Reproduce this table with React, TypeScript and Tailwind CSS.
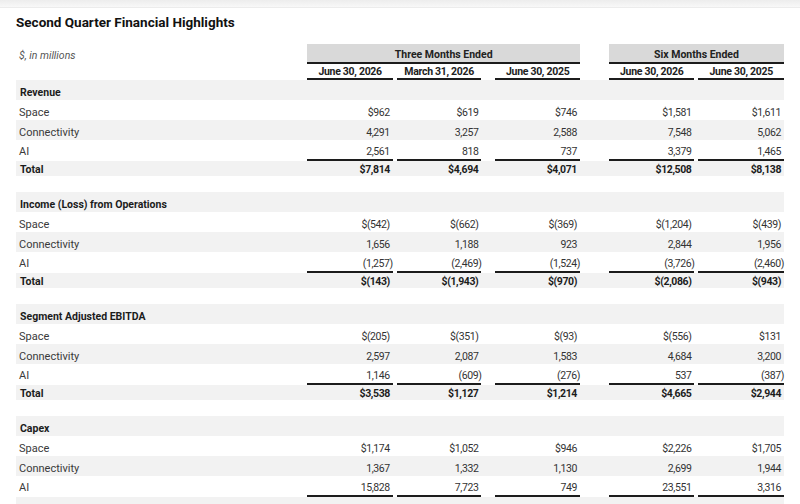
import React from 'react';

type Row = { label: string; values: string[] };
type Section = { title: string; rows: Row[]; total?: string[] };

const sections: Section[] = [
  {
    title: 'Revenue',
    rows: [
      { label: 'Space', values: ['$962', '$619', '$746', '$1,581', '$1,611'] },
      { label: 'Connectivity', values: ['4,291', '3,257', '2,588', '7,548', '5,062'] },
      { label: 'AI', values: ['2,561', '818', '737', '3,379', '1,465'] },
    ],
    total: ['$7,814', '$4,694', '$4,071', '$12,508', '$8,138'],
  },
  {
    title: 'Income (Loss) from Operations',
    rows: [
      { label: 'Space', values: ['$(542)', '$(662)', '$(369)', '$(1,204)', '$(439)'] },
      { label: 'Connectivity', values: ['1,656', '1,188', '923', '2,844', '1,956'] },
      { label: 'AI', values: ['(1,257)', '(2,469)', '(1,524)', '(3,726)', '(2,460)'] },
    ],
    total: ['$(143)', '$(1,943)', '$(970)', '$(2,086)', '$(943)'],
  },
  {
    title: 'Segment Adjusted EBITDA',
    rows: [
      { label: 'Space', values: ['$(205)', '$(351)', '$(93)', '$(556)', '$131'] },
      { label: 'Connectivity', values: ['2,597', '2,087', '1,583', '4,684', '3,200'] },
      { label: 'AI', values: ['1,146', '(609)', '(276)', '537', '(387)'] },
    ],
    total: ['$3,538', '$1,127', '$1,214', '$4,665', '$2,944'],
  },
  {
    title: 'Capex',
    rows: [
      { label: 'Space', values: ['$1,174', '$1,052', '$946', '$2,226', '$1,705'] },
      { label: 'Connectivity', values: ['1,367', '1,332', '1,130', '2,699', '1,944'] },
      { label: 'AI', values: ['15,828', '7,723', '749', '23,551', '3,316'] },
    ],
    // total row falls below the fold
  },
];

// widths + gaps of the five value columns
const cols = [
  'w-[86px]',
  'ml-[4px] w-[85px]',
  'ml-[14px] w-[85px]',
  'ml-[29px] w-[86px]',
  'ml-[4px] w-[86px]',
];

// space / connectivity / AI rows (AI carries the underline)
const rowCls = ['h-[20px] pt-[5px] bg-white', 'h-[20px] pt-[5px] bg-[#f2f2f2]', 'h-[21px] pt-[4px] bg-white'];

const dates = ['June 30, 2026', 'March 31, 2026', 'June 30, 2025', 'June 30, 2026', 'June 30, 2025'];

function Cells({ values, bold, line }: { values: string[]; bold?: boolean; line?: boolean }) {
  return (
    <>
      {values.map((v, i) => (
        <div
          key={i}
          className={`${cols[i]} flex h-full justify-end pr-[3px] ${line ? 'border-b-2 border-[#1c1c1c]' : ''}`}
        >
          <span
            className={`text-[10.5px] leading-[15px] tracking-[-0.4px] ${bold ? 'font-bold text-[#1c1c1c]' : 'text-[#333]'} ${v.startsWith('(') ? 'mr-[-3px]' : ''}`}
          >
            {v}
          </span>
        </div>
      ))}
    </>
  );
}

function SectionBlock({ s }: { s: Section }) {
  return (
    <div className="flex flex-col">
      <div className="h-[20px] bg-[#f2f2f2] pl-[4px] pt-[5px] text-[10.5px] leading-[15px] font-bold text-[#1c1c1c]">
        {s.title}
      </div>
      {s.rows.map((r, i) => (
        <div key={r.label} className={`flex ${rowCls[i]}`}>
          <div className="w-[293px] pl-[3px] text-[11px] leading-[15px] text-[#3a3a3a]">{r.label}</div>
          <Cells values={r.values} line={i === 2} />
        </div>
      ))}
      {s.total ? (
        <div className="flex h-[15px] bg-[#f2f2f2] pt-[1px]">
          <div className="w-[293px] pl-[4px] text-[10.5px] leading-[15px] font-bold text-[#1c1c1c]">Total</div>
          <Cells values={s.total} bold />
        </div>
      ) : (
        <div className="h-[15px] bg-[#f2f2f2]" />
      )}
    </div>
  );
}

export default function App() {
  return (
    <div className="min-h-screen bg-white font-['Roboto',sans-serif]">
      <div className="h-[8px] border-b border-[#ececec] bg-gradient-to-b from-[#ededed] to-[#f8f8f8]" />
      <div className="px-4">
        <h1 className="mt-[5px] h-[18px] text-[13.5px] leading-[18px] font-bold text-[#111]">
          Second Quarter Financial Highlights
        </h1>

        {/* column headings */}
        <div className="mt-[13px] flex h-[20px]">
          <div className="w-[293px] pl-[3px] pt-[4px] text-[10.5px] leading-[15px] italic text-[#555]">$, in millions</div>
          <div className="w-[274px] border-b-2 border-[#1c1c1c] bg-[#d9d9d9] pt-[4px] text-center text-[10.5px] leading-[14px] font-bold text-[#222]">
            Three Months Ended
          </div>
          <div className="ml-[29px] w-[176px] border-b-2 border-[#1c1c1c] bg-[#d9d9d9] pt-[4px] text-center text-[10.5px] leading-[14px] font-bold text-[#222]">
            Six Months Ended
          </div>
        </div>
        <div className="flex h-[16px]">
          <div className="w-[293px]" />
          {dates.map((d, i) => (
            <div
              key={i}
              className={`${cols[i]} border-b-2 border-[#1c1c1c] pt-[1px] text-center text-[10.5px] leading-[13px] tracking-[-0.3px] font-bold text-[#222]`}
            >
              {d}
            </div>
          ))}
        </div>

        <div className="flex flex-col gap-[16px]">
          {sections.map((s) => (
            <SectionBlock key={s.title} s={s} />
          ))}
        </div>
      </div>
    </div>
  );
}
